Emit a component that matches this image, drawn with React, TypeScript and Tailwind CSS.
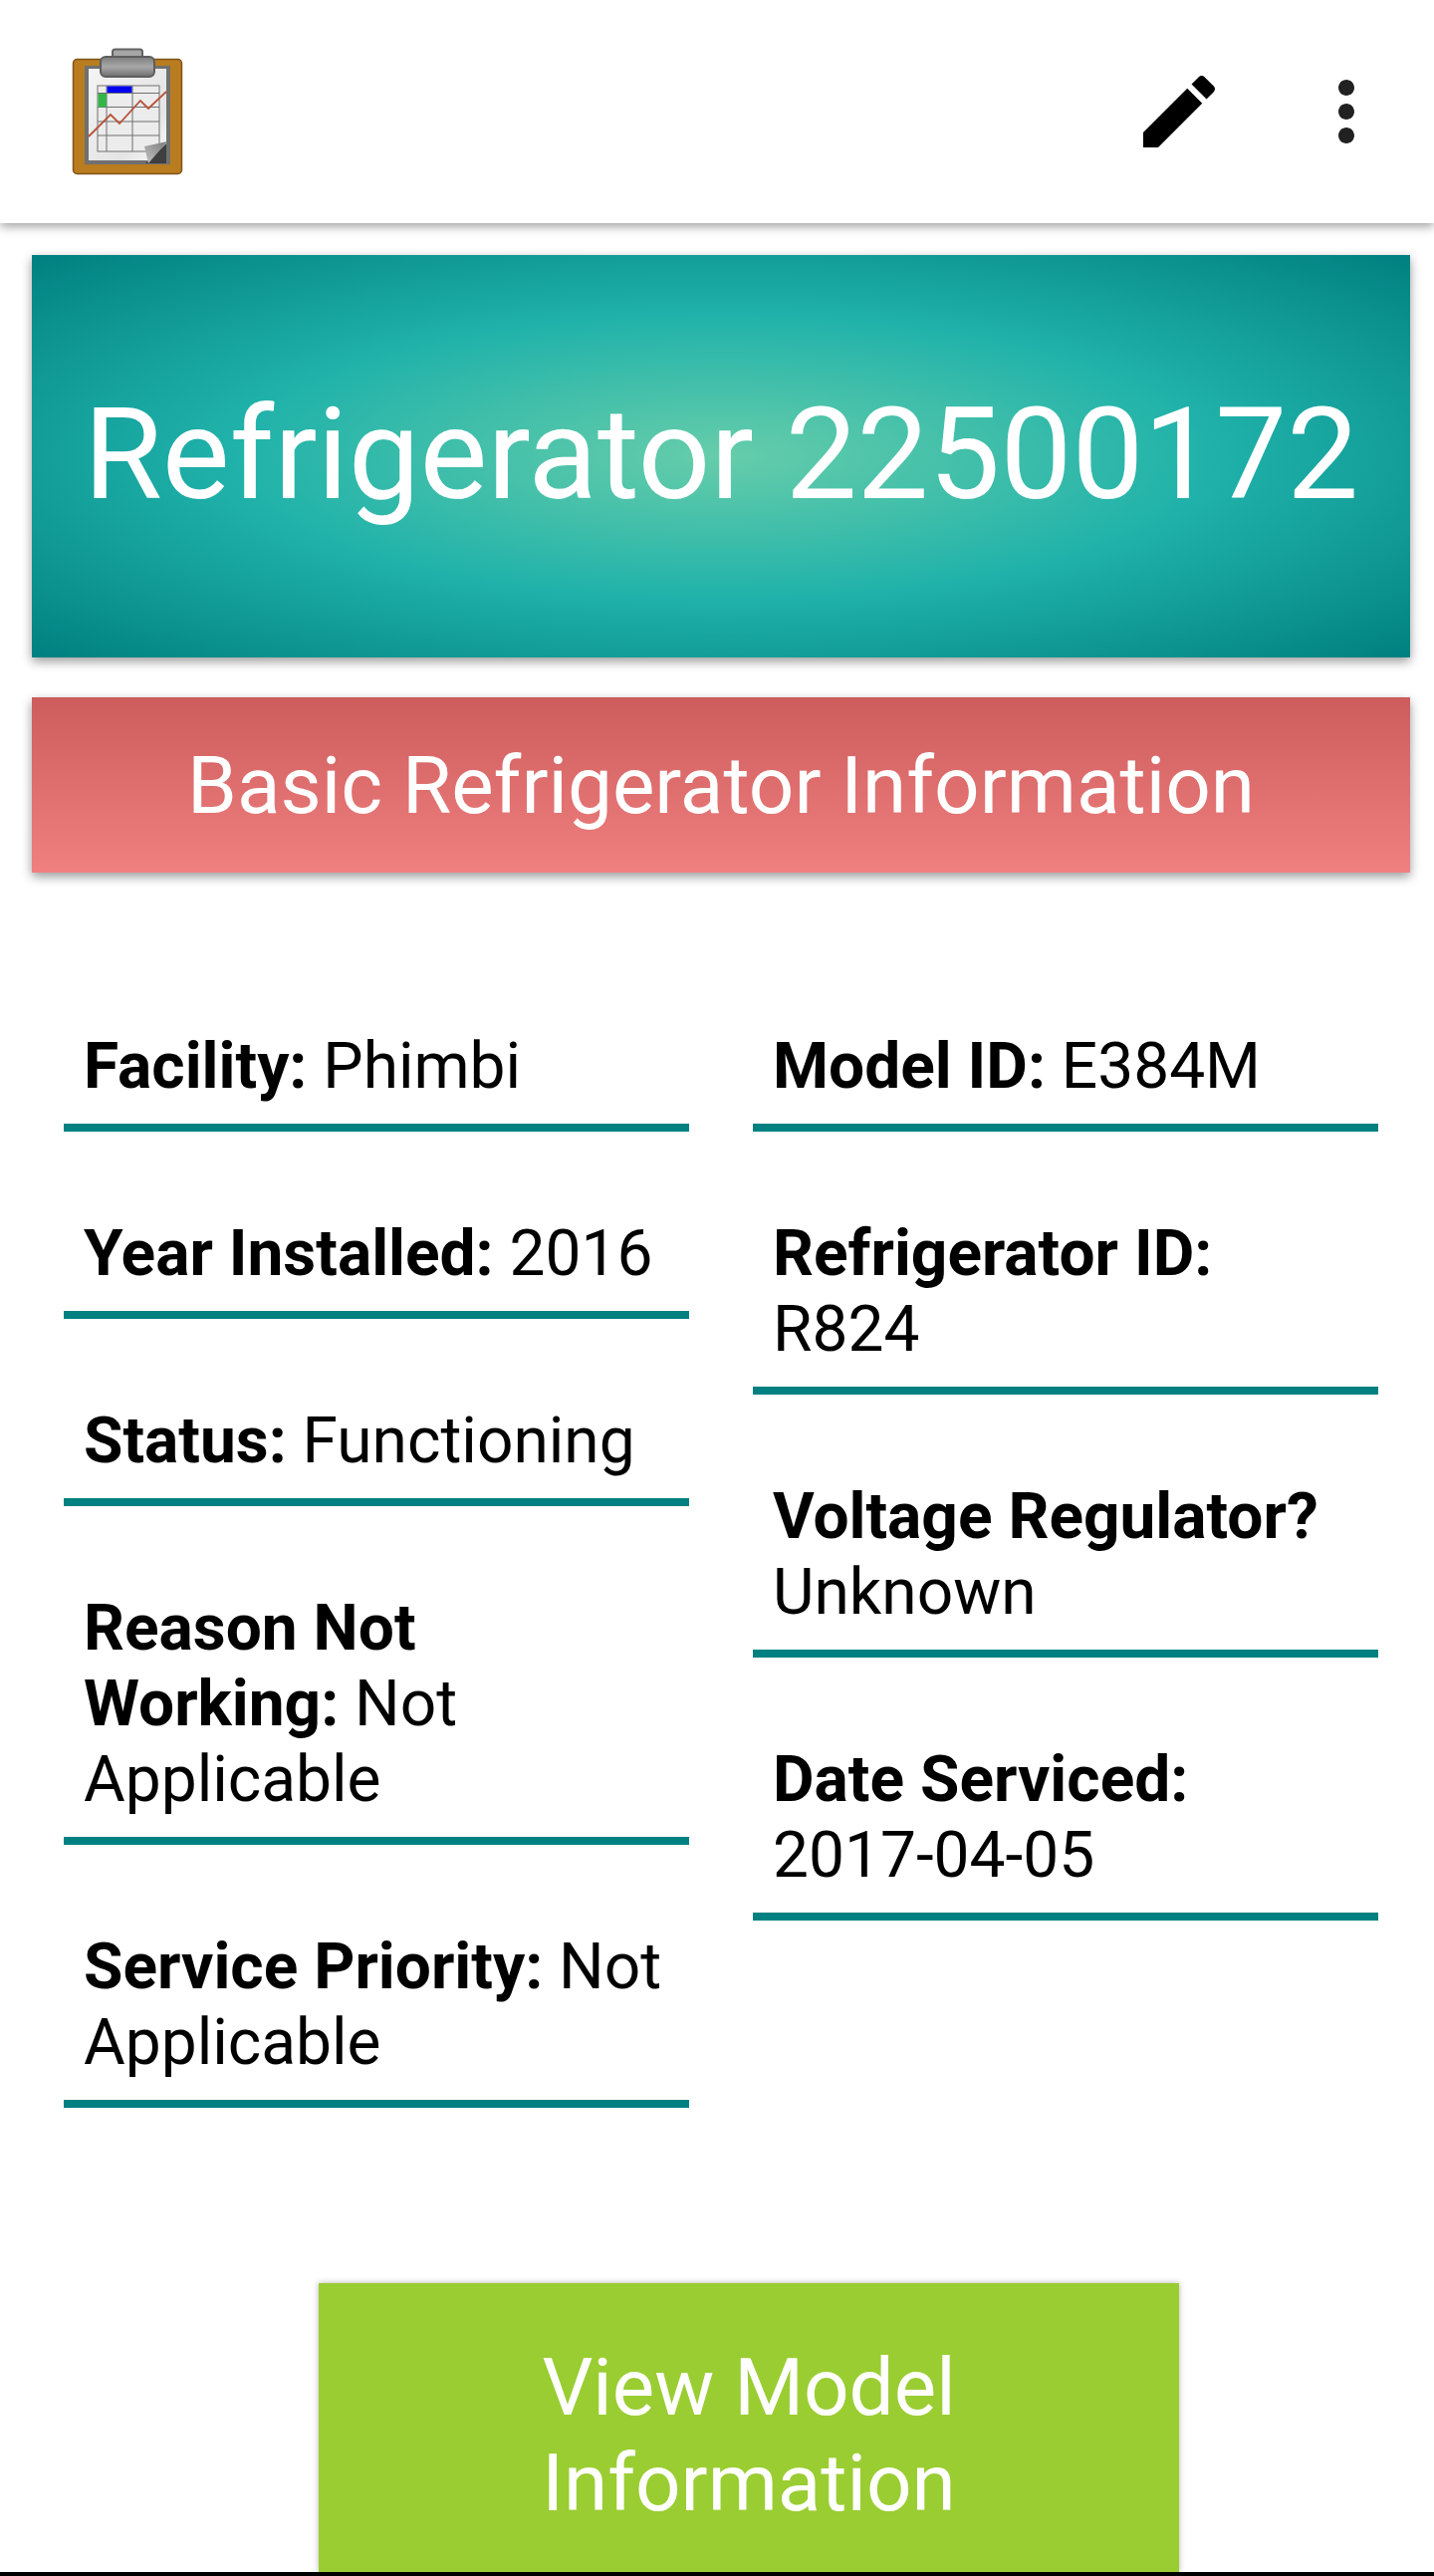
const leftItems = [
  { label: "Facility:", value: "Phimbi" },
  { label: "Year Installed:", value: "2016" },
  { label: "Status:", value: "Functioning" },
  { label: "Reason Not Working:", value: "Not Applicable" },
  { label: "Service Priority:", value: "Not Applicable" },
];

const rightItems = [
  { label: "Model ID:", value: "E384M" },
  { label: "Refrigerator ID:", value: "R824" },
  { label: "Voltage Regulator?", value: "Unknown" },
  { label: "Date Serviced:", value: "2017-04-05" },
];

function ClipboardLogo() {
  return (
    <svg width="128" height="128" viewBox="0 0 128 128">
      <defs>
        <linearGradient id="clip" x1="0" y1="0" x2="0" y2="1">
          <stop offset="0" stopColor="#7c7c7c" />
          <stop offset="0.5" stopColor="#a8a8a8" />
          <stop offset="1" stopColor="#6e6e6e" />
        </linearGradient>
        <linearGradient id="paper" x1="0" y1="0" x2="1" y2="1">
          <stop offset="0" stopColor="#f4f4f4" />
          <stop offset="0.7" stopColor="#e4e4e4" />
          <stop offset="1" stopColor="#fafafa" />
        </linearGradient>
        <linearGradient id="curl" x1="0" y1="1" x2="1" y2="0">
          <stop offset="0" stopColor="#c4c4c4" />
          <stop offset="1" stopColor="#7a7a7a" />
        </linearGradient>
      </defs>
      {/* board */}
      <rect x="9.5" y="11.5" width="109" height="115" rx="4" fill="#b97c1f" stroke="#7f5418" strokeWidth="1.5" />
      <rect x="21" y="18" width="86" height="99" fill="#707070" />
      <rect x="25" y="21" width="78" height="92" fill="url(#paper)" />
      {/* table */}
      <g fill="none" stroke="#707070" strokeWidth="1">
        <rect x="34" y="38" width="62" height="66" fill="#ececec" />
        <path d="M34 45.5H96M34 59.5H96M34 74H96M34 88H96M43 38V104M69 38V104" />
      </g>
      <rect x="43.5" y="38.5" width="25" height="6.5" fill="#0000f0" />
      <rect x="34.5" y="46" width="8.5" height="13.5" fill="#34b54a" />
      {/* trend line */}
      <path d="M25 89L47 67L56 76L77 53L85 61L103 44" fill="none" stroke="#b5533a" strokeWidth="1.8" />
      {/* curled corner */}
      <path d="M82 116L103 116V96Z" fill="#3f3f3f" />
      <path d="M81 99L104 94L85 116Z" fill="url(#curl)" />
      {/* clip */}
      <rect x="49" y="1.5" width="30" height="14" rx="2.5" fill="#a6a6a6" stroke="#636363" strokeWidth="2" />
      <rect x="37" y="9" width="54" height="20" rx="5" fill="url(#clip)" stroke="#5e5e5e" strokeWidth="2" />
    </svg>
  );
}

function InfoItem({ label, value }: { label: string; value: string }) {
  return (
    <div className="mb-[85px] border-b-[8px] border-[#008080] px-5 pb-[19px] text-[64px] leading-[76px] text-black">
      <span className="font-bold">{label}</span> <span>{value}</span>
    </div>
  );
}

export default function App() {
  return (
    <div className="relative h-[2586px] w-[1440px] overflow-hidden bg-white font-['Roboto',sans-serif]">
      <header className="flex h-[224px] items-center justify-between pl-[64px] pr-[40px] shadow-[0_3px_10px_rgba(0,0,0,0.4)]">
        <ClipboardLogo />
        <div className="flex items-center gap-[72px]">
          <svg width="96" height="96" viewBox="0 0 24 24" fill="#000">
            <path d="M3 17.25V21h3.75L17.81 9.94l-3.75-3.75L3 17.25zM20.71 7.04c.39-.39.39-1.02 0-1.41l-2.34-2.34c-.39-.39-1.02-.39-1.41 0l-1.83 1.83 3.75 3.75 1.83-1.83z" />
          </svg>
          <svg width="96" height="96" viewBox="0 0 24 24" fill="#212121">
            <path d="M12 8c1.1 0 2-.9 2-2s-.9-2-2-2-2 .9-2 2 .9 2 2 2zm0 2c-1.1 0-2 .9-2 2s.9 2 2 2 2-.9 2-2-.9-2-2-2zm0 6c-1.1 0-2 .9-2 2s.9 2 2 2 2-.9 2-2-.9-2-2-2z" />
          </svg>
        </div>
      </header>

      <main className="pl-8 pr-6 pt-8">
        <div className="flex h-[404px] items-center justify-center bg-[radial-gradient(#66cdaa,#20b2aa,#008080)] pb-1 text-[128px] text-white shadow-[0_4px_10px_rgba(0,0,0,0.4)]">
          Refrigerator 22500172
        </div>
        <div className="mt-10 flex h-[176px] items-center justify-center bg-gradient-to-b from-[#cd5c5c] to-[#f08080] pt-[2px] text-[80px] text-white shadow-[0_4px_10px_rgba(0,0,0,0.4)]">
          Basic Refrigerator Information
        </div>

        <div className="mt-[157px] grid grid-cols-2 gap-x-16 px-8">
          <div>
            {leftItems.map((item) => (
              <InfoItem key={item.label} label={item.label} value={item.value} />
            ))}
          </div>
          <div>
            {rightItems.map((item) => (
              <InfoItem key={item.label} label={item.label} value={item.value} />
            ))}
          </div>
        </div>
      </main>

      <div className="absolute bottom-1 left-[320px] flex h-[290px] w-[864px] items-center justify-center bg-[#9acd32] pt-4 text-center text-[80px] leading-[96px] text-white shadow-[0_0_6px_rgba(0,0,0,0.3)]">
        View Model
        <br />
        Information
      </div>
      <div className="absolute inset-x-0 bottom-0 h-1 bg-black" />
    </div>
  );
}
